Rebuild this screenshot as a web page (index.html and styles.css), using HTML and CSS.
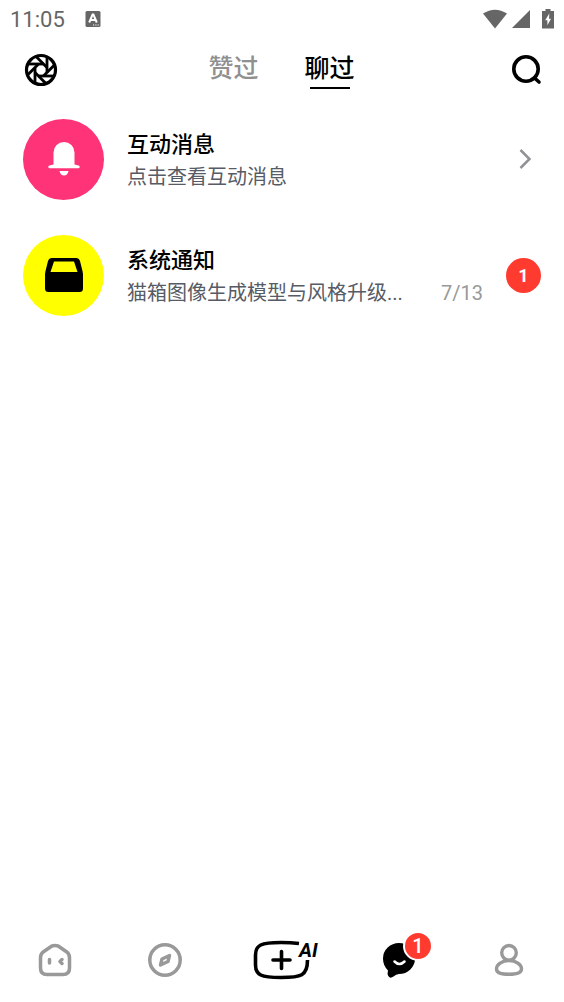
FILE: index.html
```html
<!DOCTYPE html>
<html lang="zh-CN">
<head>
<meta charset="utf-8">
<meta name="viewport" content="width=device-width, initial-scale=1">
<title>聊过</title>
<link rel="stylesheet" href="styles.css">
</head>
<body>
<div class="app">
  <div class="status">
    <span class="clock">11:05</span>
    <svg class="status-input" width="16" height="18" viewBox="0 0 16 18" aria-hidden="true">
      <rect x="0.5" y="0" width="15" height="16" rx="1.5" fill="#666"/>
      <path d="M4.2 11.500 7.600 3.500h.8L11.800 11.500M5.500 9h5" fill="none" stroke="#fff" stroke-width="2"/>
      <path d="M8 14h1.200M10.300 14h1.200M12.600 14h1.200" stroke="#fff" stroke-width="1"/>
    </svg>
    <div class="status-icons">
      <svg width="24" height="20" viewBox="0 0 24 20" aria-hidden="true"><path d="M0 3.500Q12-4.200 24 3.500L12 18.500Z" fill="#666"/></svg>
      <svg width="18" height="20" viewBox="0 0 18 20" aria-hidden="true"><path d="M18 0v18H0Z" fill="#666"/></svg>
      <svg class="battery" width="12" height="20" viewBox="0 0 12 20" aria-hidden="true"><path d="M3.500-1h5v2H12v17.500H0V1h3.500Z" fill="#666"/><path d="M7.300 3.500 3.200 10.300h2.200v5L9 8.800H7Z" fill="#fff"/></svg>
    </div>
  </div>

  <header class="header">
    <button class="icon-button" aria-label="发现">
      <svg width="34" height="34" viewBox="-17 -17 34 34" fill="none" stroke="#000" stroke-width="2.800">
        <circle r="14.500" stroke-width="3.200"/>
        <path id="blade" d="M-13-6H2.500"/>
        <use href="#blade" transform="rotate(45)"/>
        <use href="#blade" transform="rotate(90)"/>
        <use href="#blade" transform="rotate(135)"/>
        <use href="#blade" transform="rotate(180)"/>
        <use href="#blade" transform="rotate(225)"/>
        <use href="#blade" transform="rotate(270)"/>
        <use href="#blade" transform="rotate(315)"/>
      </svg>
    </button>
    <nav class="tabs" aria-label="消息分类">
      <a class="tab" href="#liked">赞过</a>
      <a class="tab tab-active" href="#chats" aria-current="page">聊过</a>
    </nav>
    <button class="icon-button" aria-label="搜索">
      <svg width="34" height="34" viewBox="0 0 34 34" fill="none" stroke="#000" stroke-width="3.600" stroke-linecap="round"><circle cx="17" cy="16" r="12.200"/><path d="m25.500 25 4.500 4"/></svg>
    </button>
  </header>

  <main class="list">
    <a class="row" href="#interactions">
      <span class="avatar avatar-pink">
        <svg width="32" height="36" viewBox="0 0 32 36" fill="#fff" aria-hidden="true"><path d="M5.500 23.500V11.500a10.500 10.500 0 0 1 21 0V23.500l4 1a1.400 1.400 0 0 1-.4 2.800H1.900a1.400 1.400 0 0 1-.4-2.800Z"/><path d="M11.500 30h9q-1 4.500-4.500 4.500T11.500 30Z"/></svg>
      </span>
      <span class="body">
        <span class="title">互动消息</span>
        <span class="line"><span class="preview">点击查看互动消息</span></span>
      </span>
      <svg class="chevron" width="34" height="24" viewBox="0 0 34 24" fill="none" stroke="#909296" stroke-width="2.500" aria-hidden="true"><path d="m13.500 3 9 9-9 9"/></svg>
    </a>
    <a class="row" href="#notices">
      <span class="avatar avatar-yellow">
        <svg width="38" height="34" viewBox="0 0 38 34" aria-hidden="true"><path fill-rule="evenodd" d="M7 0h24q3 0 4 3l2.500 10 .5 3V30.500a3.500 3.500 0 0 1-3.500 3.500h-31A3.500 3.500 0 0 1 0 30.500V16l.5-3L3 3Q4 0 7 0ZM9 3.500 5.500 14h27L29 3.500Z"/></svg>
      </span>
      <span class="body">
        <span class="title">系统通知</span>
        <span class="line"><span class="preview">猫箱图像生成模型与风格升级...</span><time class="date">7/13</time></span>
      </span>
      <span class="badge">1</span>
    </a>
  </main>

  <nav class="bottom" aria-label="主导航">
    <a class="nav-item" href="#home" aria-label="首页">
      <svg width="36" height="36" viewBox="0 0 36 36" fill="none" stroke="#999" stroke-width="3.500" stroke-linecap="round" stroke-linejoin="round"><path d="M14.500 4.200q3.500-1.500 7 0l8 5.500q3 2.300 3 6V26q0 6.500-6.500 6.500H10Q3.500 32.500 3.500 26V15.700q0-3.700 3-6Z"/><path d="M12.500 17.500v3.500M25 17.500l-2 2 2 2"/></svg>
    </a>
    <a class="nav-item" href="#explore" aria-label="探索">
      <svg width="36" height="36" viewBox="0 0 36 36" fill="none" stroke="#999" stroke-width="3.500" stroke-linejoin="round"><circle cx="18" cy="18" r="15.200"/><path d="m22.500 13.500-1.500 6-7.500 3.500 1.500-6Z" stroke-width="3.400"/></svg>
    </a>
    <a class="nav-item nav-create" href="#create" aria-label="AI 创作">
      <svg width="68" height="44" viewBox="0 0 68 44" fill="none" stroke="#000" stroke-width="3.600" stroke-linecap="round"><path d="M51 5.500Q43 4.500 33 4.500C13 4.500 7.500 7 7.500 17v10C7.500 37 13 39.500 33 39.500 53 39.500 59.500 38 59.500 22" stroke-linecap="butt"/><path d="M25 22h17M33.500 13.500v17"/></svg>
      <span class="ai">AI</span>
    </a>
    <a class="nav-item" href="#messages" aria-label="消息" aria-current="page">
      <span class="chat">
        <svg width="34" height="36" viewBox="0 0 34 36" aria-hidden="true"><path d="M17 1a16 15.500 0 0 1 0 31q-3 0-5.500 2.500Q8 37 6.300 34 5 32 6 28.500 1 23.500 1 16.500A16 15.500 0 0 1 17 1Z"/><path d="M12.500 19.500q5 5 10 0" fill="none" stroke="#fff" stroke-width="2.500" stroke-linecap="round"/></svg>
        <span class="nav-badge">1</span>
      </span>
    </a>
    <a class="nav-item" href="#me" aria-label="我的">
      <svg width="32" height="36" viewBox="0 0 32 36" fill="none" stroke="#999" stroke-width="3.400"><circle cx="16" cy="10.800" r="7.300"/><path d="M16 18.500c7 0 12.500 4 12.500 8.500 0 4-4.500 5.300-12.500 5.300S3.500 31 3.500 27c0-4.500 5.500-8.500 12.500-8.500Z"/></svg>
    </a>
  </nav>
</div>
</body>
</html>
```

FILE: styles.css
```css
* { box-sizing: border-box; }

body {
  margin: 0;
  background: #fff;
  color: #000;
  font-family: Roboto, "Noto Sans CJK SC", sans-serif;
}

a { color: inherit; text-decoration: none; }
svg { display: block; flex: none; overflow: visible; }

.app { min-height: 100vh; display: flex; flex-direction: column; }

.status {
  height: 38px;
  padding: 2px 10px 0;
  display: flex;
  align-items: center;
  gap: 20px;
  color: #666;
}
.clock { font-size: 22px; line-height: 24px; }
.status-icons { margin-left: auto; display: flex; gap: 5px; align-items: center; }
.battery { margin-left: 7px; }

.header {
  height: 63px;
  padding: 0 21px 0 24px;
  display: flex;
  align-items: center;
  justify-content: space-between;
}
.icon-button { padding: 0; border: 0; background: none; }
.tabs { display: flex; gap: 46px; padding-right: 4px; }
.tab {
  padding-bottom: 2px;
  font-size: 25px;
  line-height: 36px;
  font-weight: 500;
  color: #909090;
}
.tab-active {
  color: #000;
  background: linear-gradient(#000, #000) center bottom / 40px 2px no-repeat;
}

.list { flex: 1; }
.row {
  height: 116px;
  padding: 0 23px;
  display: flex;
  align-items: center;
}
.avatar {
  width: 81px;
  height: 81px;
  flex: none;
  border-radius: 50%;
  display: flex;
  align-items: center;
  justify-content: center;
}
.avatar-pink { background: #ff3377; }
.avatar-yellow { background: #ffff00; }
.body {
  flex: 1;
  min-width: 0;
  padding: 4px 23px 0;
  display: flex;
  flex-direction: column;
  gap: 2px;
}
.title { font-size: 22px; line-height: 30px; font-weight: 500; }
.line { display: flex; justify-content: space-between; gap: 24px; font-size: 20px; line-height: 30px; }
.preview {
  min-width: 0;
  overflow: hidden;
  text-overflow: ellipsis;
  white-space: nowrap;
  color: #575b66;
}
.date { color: #999; }
.badge {
  width: 35px;
  height: 35px;
  flex: none;
  border-radius: 50%;
  background: #ff3b30;
  color: #fff;
  font-size: 18px;
  line-height: 35px;
  font-weight: 700;
  text-align: center;
}

.bottom { height: 84px; display: flex; align-items: center; }
.nav-item { flex: 110; display: flex; justify-content: center; }
.nav-create { flex: 124; position: relative; }
.ai {
  position: absolute;
  top: 0;
  left: calc(50% + 17px);
  font-size: 20px;
  line-height: 24px;
  font-weight: 700;
  font-style: italic;
}
.chat { position: relative; }
.nav-badge {
  position: absolute;
  top: -11px;
  left: 21px;
  width: 30px;
  height: 30px;
  border: 2px solid #fff;
  border-radius: 50%;
  background: #ff3b30;
  color: #fff;
  font-size: 20px;
  line-height: 26px;
  font-weight: 500;
  text-align: center;
}
```
